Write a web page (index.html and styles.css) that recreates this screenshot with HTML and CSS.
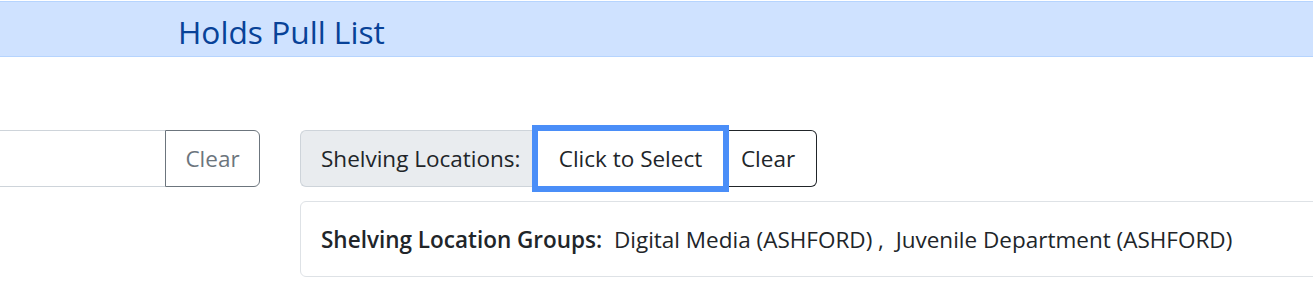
FILE: index.html
```html
<!DOCTYPE html>
<html>
<head>
	<meta charset="utf-8">
	<title>Holds Pull List</title>
	<link rel="stylesheet" href="styles.css">
</head>
<body>
	<div class="hp-header">
		<h1 class="hp-title">Holds Pull List</h1>
	</div>
	<div class="hp-content">
		<div class="hp-row">
			<div class="hp-col-left">
				<div class="hp-input-group">
					<input type="text" class="hp-input">
					<button class="hp-btn hp-btn-secondary">Clear</button>
				</div>
			</div>
			<div class="hp-col-right">
				<div class="hp-input-group">
					<span class="hp-addon">Shelving Locations:</span>
					<button class="hp-btn hp-btn-select">Click to Select</button>
					<button class="hp-btn hp-btn-dark">Clear</button>
				</div>
				<div class="hp-card">
					<b>Shelving Location Groups:</b>&nbsp; Digital Media (ASHFORD)&nbsp;,&nbsp; Juvenile Department (ASHFORD)
				</div>
			</div>
		</div>
	</div>
</body>
</html>
```

FILE: styles.css
```css
body {
	margin: 0;
	background-color: #fff;
	color: #212529;
	font-family: 'Open Sans', sans-serif;
	font-size: 22.5px;
	overflow: hidden;
}

.hp-header {
	margin-top: 1px;
	height: 54px;
	background-color: #cfe2ff;
	border-top: 1px solid #b6d4fe;
	border-bottom: 1px solid #b6d4fe;
	padding-left: 178px;
}

.hp-title {
	margin: 0;
	font-weight: 400;
	font-size: 31.7px;
	line-height: 59px;
	color: #084298;
}

.hp-content {
	padding-top: 73px;
}

.hp-row {
	display: flex;
	gap: 40px;
	margin-left: -140px;
}

.hp-col-left {
	flex: 0 0 auto;
}

.hp-col-right {
	flex: 0 0 1100px;
}

/*Input groups*/

.hp-input-group {
	display: flex;
	align-items: stretch;
	height: 57px;
}

.hp-input {
	width: 305px;
	box-sizing: border-box;
	border: 1px solid #ced4da;
	border-right: 0;
	border-radius: 6px 0 0 6px;
	padding: 0 16px;
	font: inherit;
}

.hp-btn {
	box-sizing: border-box;
	margin: 0;
	background: #fff;
	font: inherit;
	padding: 0;
	border: 1px solid;
	cursor: pointer;
}

.hp-btn-secondary {
	color: #6c757d;
	border-color: #6c757d;
	border-radius: 0 6px 6px 0;
	width: 95px;
}

.hp-addon {
	display: flex;
	align-items: center;
	padding: 0 20px;
	background-color: #e9ecef;
	border: 1px solid #ced4da;
	border-right: 0;
	border-radius: 6px 0 0 6px;
	white-space: nowrap;
	width: 237px;
	box-sizing: border-box;
}

.hp-btn-select {
	color: #212529;
	border-color: #4a8ef8;
	outline: 6px solid #4a8ef8;
	outline-offset: -1px;
	width: 187px;
	position: relative;
}

.hp-btn-dark {
	color: #212529;
	border-color: #212529;
	border-left: 0;
	border-radius: 0 6px 6px 0;
	width: 93px;
	padding-right: 4px;
}

/*Card*/

.hp-card {
	margin-top: 14px;
	height: 76px;
	box-sizing: border-box;
	padding: 0 20px;
	line-height: 76px;
	border: 1px solid #dee2e6;
	border-radius: 6px;
	white-space: nowrap;
}

.hp-card b {
	font-weight: 600;
}
```
